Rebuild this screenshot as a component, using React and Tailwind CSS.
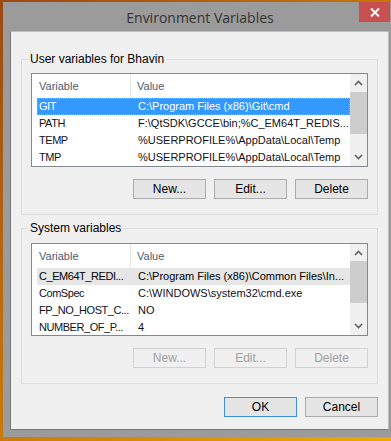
import React from "react";

const font = { fontFamily: '"Liberation Sans", Arial, sans-serif' };

function Chevron({ up }) {
  return (
    <svg width="9" height="6" viewBox="0 0 9 6" className="block">
      <path
        d={up ? "M1 5 L4.5 1.5 L8 5" : "M1 1 L4.5 4.5 L8 1"}
        fill="none"
        stroke="#606060"
        strokeWidth="1.6"
      />
    </svg>
  );
}

function ScrollBar({ thumbTop, thumbHeight }) {
  return (
    <div className="w-[17px] h-full bg-[#f0f0f0] flex flex-col items-center justify-between py-[6px] relative">
      <Chevron up />
      <div
        className="absolute left-0 w-[17px] bg-[#cdcdcd]"
        style={{ top: thumbTop, height: thumbHeight }}
      />
      <Chevron />
    </div>
  );
}

function VarList({ rows, selected, focused, thumbTop, thumbHeight, height }) {
  return (
    <div
      className="flex border border-[#828790] bg-white overflow-hidden"
      style={{ height }}
    >
      <div className="flex-1 min-w-0">
        <div className="h-[24px] flex items-center text-[11px] text-[#4c5a6e]">
          <div className="w-[99px] pl-[7px] border-r border-[#e5e5e5] h-full flex items-center">Variable</div>
          <div className="pl-[6px]">Value</div>
        </div>
        {rows.map((r, i) => {
          const sel = i === selected;
          return (
            <div
              key={r[0]}
              className={
                "h-[17px] ml-[5px] flex items-center text-[11px] whitespace-nowrap " +
                (sel
                  ? focused
                    ? "bg-[#3399ff] text-white outline outline-1 outline-dotted outline-[#f0a040] -outline-offset-1"
                    : "bg-[#e6e6e6] text-black"
                  : "text-[#101020]")
              }
            >
              <div className="w-[94px] pl-[2px] shrink-0 overflow-hidden tracking-[-0.45px]">{r[0]}</div>
              <div className="pl-[7px]">{r[1]}</div>
            </div>
          );
        })}
      </div>
      <ScrollBar thumbTop={thumbTop} thumbHeight={thumbHeight} />
    </div>
  );
}

function Btn({ children, disabled, primary, className = "" }) {
  return (
    <div
      className={
        "w-[73px] h-[20px] flex items-center justify-center text-[12px] border " +
        (disabled
          ? "border-[#d2d2d2] bg-[#f0f0f0] text-[#a0a0a0] "
          : primary
          ? "border-[#3c8ee0] bg-[#e5e5e5] text-black "
          : "border-[#acacac] bg-[#e5e5e5] text-black ") +
        className
      }
    >
      {children}
    </div>
  );
}

function GroupBox({ title, children, className = "" }) {
  return (
    <div className={"relative border border-[#dcdcdc] " + className}>
      <span className="absolute -top-[9px] left-[6px] px-[2px] bg-[#f0f0f0] text-[12px] leading-[16px] text-black">
        {title}
      </span>
      {children}
    </div>
  );
}

export default function App() {
  const userRows = [
    ["GIT", "C:\\Program Files (x86)\\Git\\cmd"],
    ["PATH", "F:\\QtSDK\\GCCE\\bin;%C_EM64T_REDIS..."],
    ["TEMP", "%USERPROFILE%\\AppData\\Local\\Temp"],
    ["TMP", "%USERPROFILE%\\AppData\\Local\\Temp"],
  ];
  const sysRows = [
    ["C_EM64T_REDI...", "C:\\Program Files (x86)\\Common Files\\In..."],
    ["ComSpec", "C:\\WINDOWS\\system32\\cmd.exe"],
    ["FP_NO_HOST_C...", "NO"],
    ["NUMBER_OF_P...", "4"],
  ];

  return (
    <div
      className="w-[391px] h-[441px] overflow-hidden bg-[linear-gradient(135deg,#9a4a12_0%,#c8780a_50%,#f0a800_100%)] pt-[2px] pl-[3px]"
      style={font}
    >
      <div className="w-[388px] h-[435px] bg-[#9b9b9b]">
        <div className="relative h-[29px] flex items-center justify-center">
          <span
            className="text-[14px] text-[#333] mt-[2px] ml-[6px]"
            style={{ fontFamily: '"Open Sans", "Liberation Sans", sans-serif' }}
          >
            Environment Variables
          </span>
          <div className="absolute top-0 right-[1px] w-[31px] h-[20px] bg-[#c75050] flex items-center justify-center">
            <svg width="10" height="9" viewBox="0 0 10 9">
              <path d="M1 0.5 L9 8.5 M9 0.5 L1 8.5" stroke="white" strokeWidth="2" />
            </svg>
          </div>
        </div>
        <div className="ml-[7px] w-[379px] h-[399px] bg-[#f0f0f0] border border-[#7a7a7a] border-t-[#bcbcbc] border-r-[#bcbcbc] pl-[10px] pr-[10px] pt-[27px]">
          <GroupBox title="User variables for Bhavin" className="h-[156px] px-[9px] pt-[13px]">
            <VarList rows={userRows} selected={0} focused thumbTop={18} thumbHeight={42} height={94} />
            <div className="flex justify-end gap-[8px] mt-[12px]">
              <Btn>New...</Btn>
              <Btn>Edit...</Btn>
              <Btn>Delete</Btn>
            </div>
          </GroupBox>
          <GroupBox title="System variables" className="mt-[13px] h-[156px] px-[9px] pt-[14px]">
            <VarList rows={sysRows} selected={0} thumbTop={17} thumbHeight={42} height={93} />
            <div className="flex justify-end gap-[8px] mt-[12px]">
              <Btn disabled>New...</Btn>
              <Btn disabled>Edit...</Btn>
              <Btn disabled>Delete</Btn>
            </div>
          </GroupBox>
          <div className="flex justify-end gap-[8px] mt-[13px]">
            <Btn primary>OK</Btn>
            <Btn>Cancel</Btn>
          </div>
        </div>
      </div>
    </div>
  );
}
